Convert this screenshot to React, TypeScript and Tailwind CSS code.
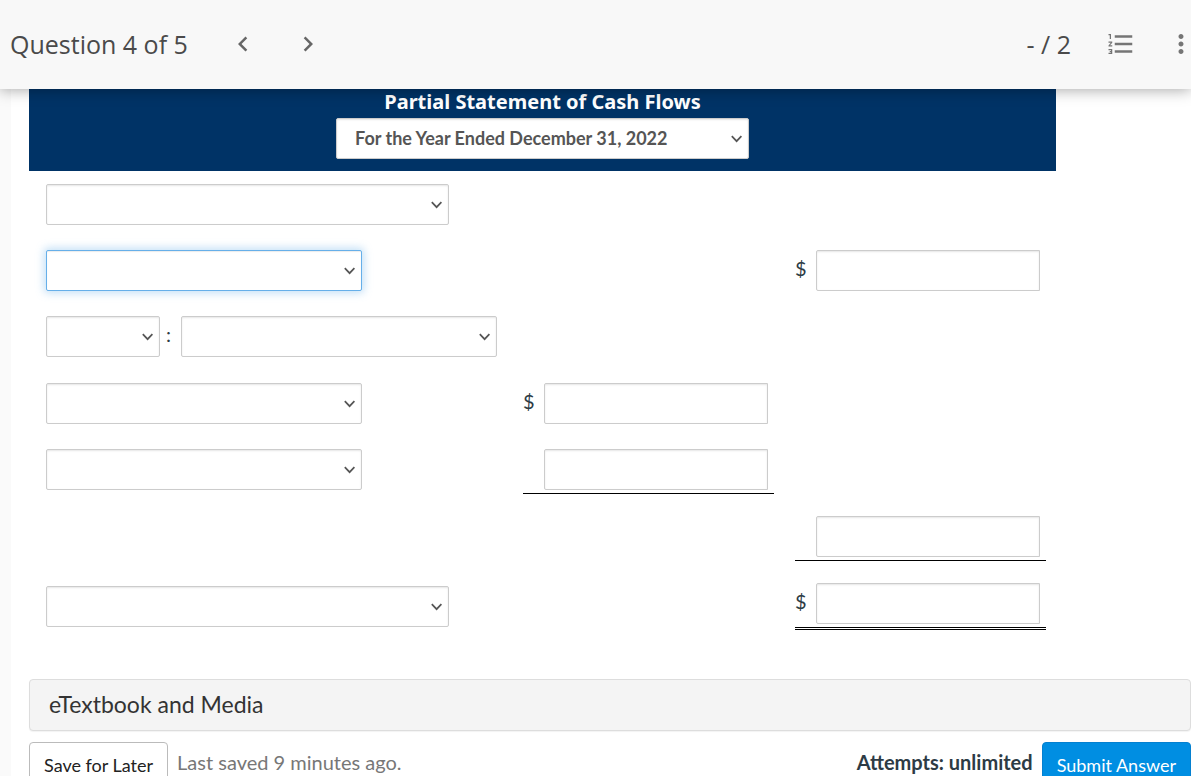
import { useState } from "react";
import type { ReactNode } from "react";
import {
  MdChevronLeft,
  MdChevronRight,
  MdFormatListNumbered,
  MdMoreVert,
} from "react-icons/md";

type PickerProps = {
  label: string;
  width: string;
  options?: string[];
  active?: boolean;
  bold?: boolean;
};

function Picker({ label, width, options = [""], active, bold }: PickerProps) {
  const [value, setValue] = useState(options[0]);

  return (
    <div className={`relative inline-block align-top ${width}`}>
      <select
        aria-label={label}
        value={value}
        onChange={(e) => setValue(e.target.value)}
        className={`block h-[41px] w-full appearance-none rounded-xs border bg-white pr-8 pb-0.5 pl-[18px] text-lg text-[#555] outline-none ${
          bold ? "font-bold" : ""
        } ${
          active
            ? "border-[#66afe9] shadow-[inset_0_1px_1px_rgba(0,0,0,0.08),0_0_8px_2px_rgba(102,175,233,0.4)]"
            : "border-[#ccc] shadow-[inset_0_1px_2px_rgba(0,0,0,0.1)]"
        }`}
      >
        {options.map((o) => (
          <option key={o} value={o}>
            {o}
          </option>
        ))}
      </select>
      <svg
        viewBox="0 0 12 8"
        className="pointer-events-none absolute top-[17px] right-[6px] h-2 w-3"
        fill="none"
        stroke="#555"
        strokeWidth="1.7"
      >
        <path d="M.8 1.200 5.600 6.200l4.800-5" />
      </svg>
    </div>
  );
}

type AmountProps = {
  label: string;
  dollar?: boolean;
  rule?: "single" | "double";
};

function Amount({ label, dollar, rule }: AmountProps) {
  const [value, setValue] = useState("");

  return (
    <div
      className={`flex w-[251px] ${
        rule === "single" ? "border-b border-black pb-[3px]" : ""
      } ${rule === "double" ? "border-b-3 border-double border-black pb-[3px]" : ""}`}
    >
      <span className="w-[21px] pt-1 text-xl">{dollar ? "$" : ""}</span>
      <input
        type="text"
        aria-label={label}
        value={value}
        onChange={(e) => setValue(e.target.value)}
        className="h-[41px] w-[224px] rounded-l-xs border border-[#ccc] bg-white px-3 text-right text-lg shadow-[inset_0_1px_2px_rgba(0,0,0,0.1)] outline-none"
      />
    </div>
  );
}

type RowProps = {
  account?: ReactNode;
  inner?: ReactNode;
  total?: ReactNode;
  middle?: boolean;
};

function Row({ account, inner, total, middle }: RowProps) {
  const align = middle ? "align-middle" : "align-top";
  return (
    <tr>
      <td className={`pt-[13px] pb-[9px] pl-[17px] ${align}`}>{account}</td>
      <td className={`w-[272px] pt-[13px] pb-[9px] ${align}`}>{inner}</td>
      <td className={`w-[261px] pt-[13px] pb-[9px] ${align}`}>{total}</td>
    </tr>
  );
}

function TopBar() {
  return (
    <header className="relative z-10 flex h-[89px] shrink-0 items-center justify-between bg-[#f8f8f8] pl-[10px] font-['Open_Sans',sans-serif] text-[25px] text-[#4a4a4a] shadow-[0_1px_14px_rgba(0,0,0,0.35)]">
      <div className="flex items-center">
        <h1>Question 4 of 5</h1>
        <nav className="mb-0.5 ml-10 flex gap-[35px] text-[#666]">
          <button aria-label="Previous question">
            <MdChevronLeft size={30} />
          </button>
          <button aria-label="Next question">
            <MdChevronRight size={30} />
          </button>
        </nav>
      </div>
      <div className="flex items-center gap-[35px]">
        <span>- / 2</span>
        <button aria-label="Question list" className="mb-0.5 text-[#757575]">
          <MdFormatListNumbered size={30} />
        </button>
        <button aria-label="More" className="mb-0.5 flex w-5 justify-center text-[#757575]">
          <MdMoreVert size={30} className="shrink-0" />
        </button>
      </div>
    </header>
  );
}

function Statement() {
  return (
    <div className="mr-[135px]">
      <table className="w-full table-auto border-collapse">
        <thead>
          <tr>
            <th colSpan={3} className="bg-[#003366] pt-px pb-3 text-center">
              <div className="mb-1 font-['Noto_Sans','Open_Sans',sans-serif] text-xl leading-6 font-bold text-white">
                Partial Statement of Cash Flows
              </div>
              <Picker
                label="Statement period"
                width="w-[413px]"
                options={["For the Year Ended December 31, 2022"]}
                bold
              />
            </th>
          </tr>
        </thead>
        <tbody className="[&>tr]:h-[66px]">
          <Row account={<Picker label="Section heading" width="w-[403px]" />} />
          <Row
            account={<Picker label="First account" width="w-[316px]" active />}
            total={<Amount label="First amount" dollar />}
          />
          <Row
            account={
              <div className="flex pb-1">
                <Picker label="Add or less" width="w-[114px]" />
                <span className="w-[21px] pt-1 pl-[6px] text-xl">:</span>
                <Picker label="Adjustment heading" width="w-[316px]" />
              </div>
            }
          />
          <Row
            account={<Picker label="First adjustment" width="w-[316px]" />}
            inner={<Amount label="First adjustment amount" dollar />}
          />
          <Row
            account={<Picker label="Second adjustment" width="w-[316px]" />}
            inner={<Amount label="Second adjustment amount" rule="single" />}
          />
          <Row total={<Amount label="Total adjustments" rule="single" />} />
          <Row
            account={<Picker label="Closing line" width="w-[403px]" />}
            total={<Amount label="Closing amount" dollar rule="double" />}
            middle
          />
        </tbody>
      </table>
    </div>
  );
}

export default function App() {
  return (
    <div className="flex h-screen flex-col overflow-hidden bg-[#fafafa] font-['Lato',sans-serif] text-[#2d3b45]">
      <TopBar />
      <main className="ml-[11px] grow bg-white pl-[18px]">
        <Statement />

        <button className="mt-10 block h-[52px] w-full rounded-sm border border-[#ddd] bg-[#f4f4f4] pb-0.5 pl-[19px] text-left text-[23px] text-[#333] shadow-[0_1px_1px_rgba(0,0,0,0.05)]">
          eTextbook and Media
        </button>

        <div className="mt-[11px] flex items-start text-xl">
          <button className="h-12 rounded-sm border border-[#bbb] bg-white px-[14px] pb-0.5 text-lg text-[#222]">
            Save for Later
          </button>
          <p className="mt-[6px] ml-[9px] text-[#777]">Last saved 9 minutes ago.</p>
          <p className="mt-[6px] mr-[9px] ml-auto font-bold">Attempts: unlimited</p>
          <button className="h-12 rounded-sm border border-[#0480d0] bg-[#008ee2] px-[14px] pb-0.5 text-lg text-white">
            Submit Answer
          </button>
        </div>
      </main>
    </div>
  );
}
